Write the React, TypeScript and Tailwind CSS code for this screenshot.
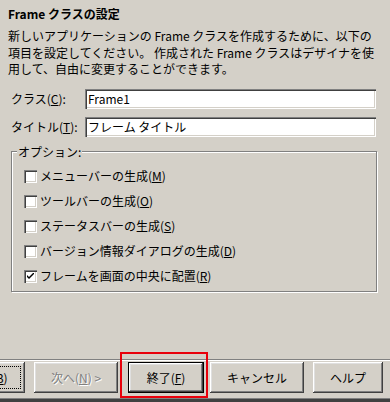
import React from "react";

const raised =
  "shadow-[inset_-1px_-1px_#404040,inset_1px_1px_#ffffff,inset_-2px_-2px_#808080,inset_2px_2px_#dfdfdf]";
const sunken =
  "shadow-[inset_1px_1px_#808080,inset_2px_2px_#404040,inset_-1px_-1px_#ffffff,inset_-2px_-2px_#d4d0c8]";

function Checkbox({ checked }: { checked?: boolean }) {
  return (
    <span
      className={`w-[13px] h-[13px] shrink-0 bg-white flex items-center justify-center ${sunken}`}
    >
      {checked && (
        <svg width="7" height="7" viewBox="0 0 7 7" className="block">
          <path d="M0 2 L0 4 L2 6 L7 1 L7 -1 L2 4 Z" fill="#000" />
        </svg>
      )}
    </span>
  );
}

function Row({ label, m, checked }: { label: string; m: string; checked?: boolean }) {
  return (
    <div className="h-[25px] flex items-center">
      <Checkbox checked={checked} />
      <span className="ml-[3px] leading-[14px]">
        {label}(<span className="underline">{m}</span>)
      </span>
    </div>
  );
}

export default function App() {
  return (
    <div className="w-[390px] h-[402px] bg-[#d4d0c8] overflow-hidden flex flex-col text-[12px] text-black font-['Noto_Sans_CJK_JP','Noto_Sans',sans-serif]">
      <div className="pt-[6px] px-[8px] font-bold leading-[16px]">Frame クラスの設定</div>
      <div className="mt-[6px] px-[8px] leading-[16.5px] whitespace-nowrap">
        新しいアプリケーションの Frame クラスを作成するために、以下の
        <br />
        項目を設定してください。 作成された Frame クラスはデザイナを使
        <br />
        用して、自由に変更することができます。
      </div>

      <div className="mt-[11px] ml-[11px] flex items-center">
        <span className="w-[74px] leading-[14px]">
          クラス(<span className="underline">C</span>):
        </span>
        <div className={`w-[291px] h-[20px] bg-white flex items-center pl-[3px] ${sunken}`}>
          Frame1
        </div>
      </div>
      <div className="mt-[8px] ml-[11px] flex items-center">
        <span className="w-[74px] leading-[14px]">
          タイトル(<span className="underline">T</span>):
        </span>
        <div className={`w-[291px] h-[20px] bg-white flex items-center pl-[3px] ${sunken}`}>
          フレーム タイトル
        </div>
      </div>

      <fieldset className="mt-[7px] ml-[11px] w-[366px] border border-[#808080] shadow-[inset_1px_1px_#ffffff,1px_1px_#ffffff] p-0 m-0">
        <legend className="ml-[5px] px-[1px] leading-[16px] bg-[#d4d0c8]">オプション:</legend>
        <div className="pt-[4px] pb-[2px] pl-[12px]">
          <Row label="メニューバーの生成" m="M" />
          <Row label="ツールバーの生成" m="O" />
          <Row label="ステータスバーの生成" m="S" />
          <Row label="バージョン情報ダイアログの生成" m="D" />
          <Row label="フレームを画面の中央に配置" m="R" checked />
        </div>
      </fieldset>

      <div className="flex-1" />

      <div className="h-[2px] border-t border-t-[#808080] border-b border-b-white" />
      <div className="mt-[1px] h-[31px] flex justify-end pr-[7px]">
        <div className={`w-[84px] shrink-0 h-full flex items-center justify-center p-[4px] ${raised}`}>
          <div className="w-full h-full border border-dotted border-black flex items-center justify-center">
            &lt; 戻る(<span className="underline">B</span>)
          </div>
        </div>
        <div
          className={`ml-[9px] w-[84px] shrink-0 h-full flex items-center justify-center text-[#808080] [text-shadow:1px_1px_#ffffff] ${raised}`}
        >
          次へ(<span className="underline">N</span>) &gt;
        </div>
        <div className="relative ml-[10px] w-[76px] shrink-0 h-full">
          <div
            className={`w-full h-full border border-black flex items-center justify-center ${raised}`}
          >
            終了(<span className="underline">F</span>)
          </div>
          <span className="absolute left-[-8px] top-[-10px] w-[88px] h-[46px] border-2 border-[#e8000b] pointer-events-none" />
        </div>
        <div className={`ml-[6px] w-[94px] shrink-0 h-full flex items-center justify-center ${raised}`}>
          キャンセル
        </div>
        <div className={`ml-[9px] w-[70px] shrink-0 h-full flex items-center justify-center ${raised}`}>
          ヘルプ
        </div>
      </div>
      <div className="mt-[5px] h-[1px] bg-[#808080]" />
      <div className="h-[3px] bg-[#404040]" />
    </div>
  );
}
